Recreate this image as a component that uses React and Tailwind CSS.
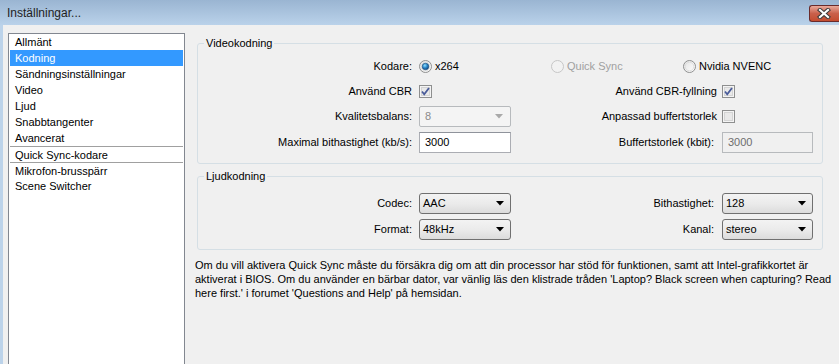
import React from 'react';

const font = { fontFamily: '"Liberation Sans", Arial, sans-serif' };

const navItems = [
  { label: 'Allmänt' },
  { label: 'Kodning', active: true },
  { label: 'Sändningsinställningar' },
  { label: 'Video' },
  { label: 'Ljud' },
  { label: 'Snabbtangenter' },
  { label: 'Avancerat' },
  { label: 'Quick Sync-kodare', sep: true },
  { label: 'Mikrofon-brusspärr', sep: true },
  { label: 'Scene Switcher' },
];

const Radio = ({ checked, disabled }) => (
  <svg width="13" height="13" viewBox="0 0 13 13" className="shrink-0">
    <defs>
      <linearGradient id="rb" x1="0" y1="0" x2="1" y2="1">
        <stop offset="0" stopColor="#e2e2e2" />
        <stop offset="1" stopColor="#ffffff" />
      </linearGradient>
      <radialGradient id="rdot" cx="0.4" cy="0.35" r="0.7">
        <stop offset="0" stopColor="#8fe0ff" />
        <stop offset="0.5" stopColor="#2a86c8" />
        <stop offset="1" stopColor="#0c3f78" />
      </radialGradient>
    </defs>
    <circle cx="6.5" cy="6.5" r="6" fill={disabled ? '#f2f2f2' : 'url(#rb)'} stroke={disabled ? '#c6c6c6' : '#8e8f8f'} />
    {!disabled && <circle cx="6.5" cy="6.5" r="4.3" fill="none" stroke="#d8d8d8" strokeWidth="0.8" />}
    {checked && <circle cx="6.5" cy="6.5" r="3.3" fill="url(#rdot)" stroke="#1b4f7c" strokeWidth="0.6" />}
  </svg>
);

const Checkbox = ({ checked }) => (
  <svg width="13" height="13" viewBox="0 0 13 13" className="shrink-0">
    <rect x="0.5" y="0.5" width="12" height="12" fill="#f4f4f4" stroke="#8e8f8f" />
    <rect x="2.5" y="2.5" width="8" height="8" fill="#e9e9e9" stroke="#d4d4d4" />
    {checked && (
      <path d="M3 6.5 L5.2 9.2 L10 3" fill="none" stroke="#4a5c9a" strokeWidth="1.8" />
    )}
  </svg>
);

const Arrow = ({ color = '#000' }) => (
  <svg width="8" height="5" viewBox="0 0 8 5" className="shrink-0">
    <path d="M0 0 H8 L4 4.5 Z" fill={color} />
  </svg>
);

const Combo = ({ value, width = 'w-[92px]', disabled }) =>
  disabled ? (
    <div className={`${width} h-[21px] flex items-center justify-between border border-[#b7babd] rounded-[2px] bg-[#f4f4f4] pl-[5px] pr-[7px] text-[#8b8b8b]`}>
      <span>{value}</span>
      <Arrow color="#a9a9a9" />
    </div>
  ) : (
    <div className={`${width} h-[21px] flex items-center justify-between border border-[#707070] rounded-[3px] bg-gradient-to-b from-[#f3f3f3] via-[#ebebeb] to-[#dcdcdc] pl-[3px] pr-[6px] text-black`}>
      <span>{value}</span>
      <Arrow />
    </div>
  );

const TextInput = ({ value, disabled, width = 'w-[92px]' }) => (
  <div
    className={`${width} h-[21px] flex items-center border pl-[5px] ${
      disabled ? 'bg-[#f0f0f0] border-[#b7babd] text-[#6d6d6d]' : 'bg-white border-[#abadb3] border-t-[#8f939b] text-black'
    }`}
  >
    {value}
  </div>
);

const Group = ({ title, className, children }) => (
  <div className={`relative border border-[#d5dfe5] rounded-[3px] ${className}`}>
    <span className="absolute -top-[8px] left-[6px] px-[2px] bg-[#f0f0f0] leading-[14px]">{title}</span>
    {children}
  </div>
);

export default function App() {
  return (
    <div className="w-[839px] h-[364px] overflow-hidden bg-[#f0f0f0] text-[11px] text-black" style={font}>
      {/* title bar */}
      <div className="h-[25px] flex items-start bg-gradient-to-b from-[#9ab5d2] to-[#bad2ea]">
        <span className="pl-[7px] pt-[5px] text-[12px] leading-[16px] text-[#1e1e1e]">Inställningar...</span>
        <div className="ml-auto mt-[5px] w-[30px] h-[17px] flex items-center justify-center pr-[1px] border border-r-0 border-[#6a2b2b] rounded-l-[3px] bg-gradient-to-b from-[#e9a99b] via-[#c9604b] to-[#c44c2f]">
          <svg width="14" height="11" viewBox="0 0 14 11">
            <path d="M3 2 L11 9 M11 2 L3 9" stroke="#3a3a3a" strokeWidth="4.2" strokeLinecap="square" />
            <path d="M3 2 L11 9 M11 2 L3 9" stroke="#ffffff" strokeWidth="2.2" strokeLinecap="square" />
          </svg>
        </div>
      </div>

      <div className="flex h-[339px]">
        <div className="w-[3px] bg-[#bcd3ea] shrink-0" />

        {/* navigation list */}
        <div className="ml-[5px] mt-[8px] w-[177px] h-[400px] shrink-0 border border-[#828790] bg-white px-[1px]">
          {navItems.map((item) => (
            <div
              key={item.label}
              className={`h-[16px] leading-[16px] pl-[5px] whitespace-nowrap ${
                item.sep ? 'border-t border-[#a0a0a0] leading-[15px]' : ''
              } ${item.active ? 'bg-[#3399ff] text-white' : ''}`}
            >
              {item.label}
            </div>
          ))}
        </div>

        {/* settings pane */}
        <div className="flex-1 pl-[12px] pt-[18px]">
          <Group title="Videokodning" className="w-[626px] pt-[14px] pb-[10px]">
            <div className="flex items-center h-[16px]">
              <span className="w-[214px] text-right">Kodare:</span>
              <div className="ml-[7px] w-[132px] flex items-center gap-[3px]">
                <Radio checked />
                <span>x264</span>
              </div>
              <div className="w-[132px] flex items-center gap-[3px] text-[#a0a0a0]">
                <Radio disabled />
                <span>Quick Sync</span>
              </div>
              <div className="flex items-center gap-[3px]">
                <Radio />
                <span>Nvidia NVENC</span>
              </div>
            </div>

            <div className="flex items-center h-[16px] mt-[9px]">
              <span className="w-[214px] text-right">Använd CBR</span>
              <div className="ml-[7px] w-[92px]">
                <Checkbox checked />
              </div>
              <span className="w-[206px] text-right">Använd CBR-fyllning</span>
              <div className="ml-[5px]">
                <Checkbox checked />
              </div>
            </div>

            <div className="flex items-center h-[21px] mt-[7px]">
              <span className="w-[214px] text-right">Kvalitetsbalans:</span>
              <div className="ml-[7px]">
                <Combo value="8" disabled />
              </div>
              <span className="w-[206px] text-right">Anpassad buffertstorlek</span>
              <div className="ml-[5px]">
                <Checkbox />
              </div>
            </div>

            <div className="flex items-center h-[21px] mt-[5px]">
              <span className="w-[214px] text-right">Maximal bithastighet (kb/s):</span>
              <div className="ml-[7px]">
                <TextInput value="3000" />
              </div>
              <span className="w-[203px] text-right">Buffertstorlek (kbit):</span>
              <div className="ml-[8px]">
                <TextInput value="3000" disabled width="w-[91px]" />
              </div>
            </div>
          </Group>

          <Group title="Ljudkodning" className="w-[626px] mt-[12px] pt-[16px] pb-[9px]">
            <div className="flex items-center h-[21px]">
              <span className="w-[214px] text-right">Codec:</span>
              <div className="ml-[7px]">
                <Combo value="AAC" />
              </div>
              <span className="w-[203px] text-right">Bithastighet:</span>
              <div className="ml-[8px]">
                <Combo value="128" width="w-[91px]" />
              </div>
            </div>
            <div className="flex items-center h-[21px] mt-[5px]">
              <span className="w-[214px] text-right">Format:</span>
              <div className="ml-[7px]">
                <Combo value="48kHz" />
              </div>
              <span className="w-[203px] text-right">Kanal:</span>
              <div className="ml-[8px]">
                <Combo value="stereo" width="w-[91px]" />
              </div>
            </div>
          </Group>

          <p className="mt-[8px] -ml-[2px] leading-[14px] whitespace-nowrap">
            Om du vill aktivera Quick Sync måste du försäkra dig om att din processor har stöd för funktionen, samt att Intel-grafikkortet är
            <br />
            aktiverat i BIOS. Om du använder en bärbar dator, var vänlig läs den klistrade tråden 'Laptop? Black screen when capturing? Read
            <br />
            here first.' i forumet 'Questions and Help' på hemsidan.
          </p>
        </div>
      </div>
    </div>
  );
}
